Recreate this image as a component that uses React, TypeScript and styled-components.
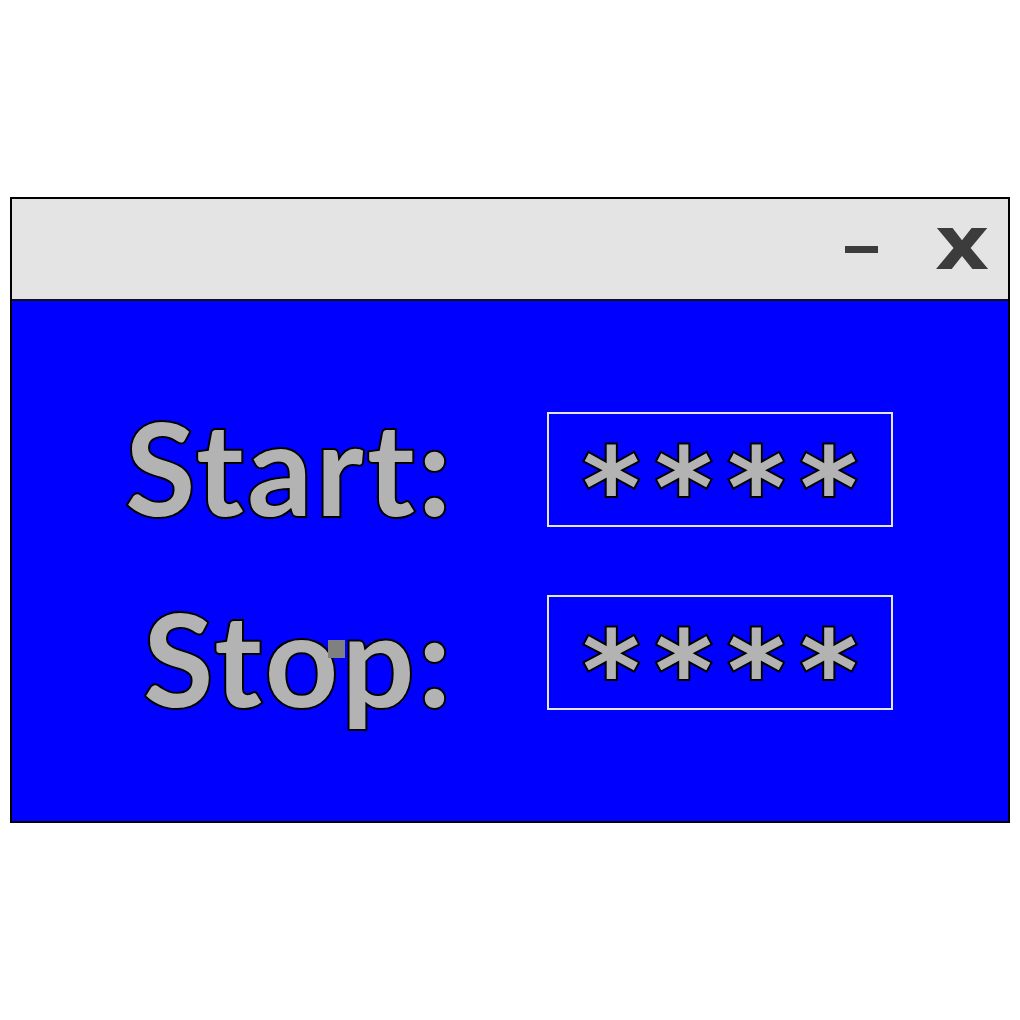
import React from "react";
import styled, { createGlobalStyle } from "styled-components";

const Global = createGlobalStyle`
  html, body { margin: 0; padding: 0; background: #ffffff; }
  body { font-family: "Lato", "Open Sans", sans-serif; }
`;

const Page = styled.div`
  min-height: 100vh;
  display: flex;
  align-items: center;
  padding: 0 10px;
  box-sizing: border-box;
`;

const Window = styled.div`
  width: 1000px;
  height: 626px;
  box-sizing: border-box;
  border: 2px solid #000000;
  display: flex;
  flex-direction: column;
  background: #0000ff;
`;

const TitleBar = styled.div`
  height: 102px;
  box-sizing: border-box;
  background: #e4e4e4;
  border-bottom: 2px solid #111111;
  display: flex;
  align-items: center;
  justify-content: flex-end;
  padding-right: 19px;
  gap: 63px;
`;

const MinButton = styled.div`
  width: 33px;
  height: 7px;
  background: #3c3c3c;
`;

const CloseButton = styled.div`
  font-family: "DejaVu Sans", sans-serif;
  font-weight: 700;
  font-size: 75px;
  line-height: 1;
  color: #3c3c3c;
  margin-top: -11px;
  transform: scaleX(1.13);
  transform-origin: right center;
`;

const Body = styled.div`
  flex: 1;
  display: grid;
  grid-template-columns: 439px 346px;
  grid-auto-rows: 115px;
  column-gap: 96px;
  row-gap: 68px;
  align-content: start;
  padding-top: 111px;
`;

const Label = styled.div<{ $shift: number }>`
  position: relative;
  justify-self: end;
  display: flex;
  align-items: center;
  font-family: "Lato", sans-serif;
  font-weight: 700;
  font-size: 128px;
  line-height: 1;
  letter-spacing: 3.5px;
  margin-right: -3.5px;
  color: #b3b3b3;
  -webkit-text-stroke: 4px #000000;
  paint-order: stroke fill;
  margin-top: ${(p) => p.$shift}px;
`;

const Glitch = styled.span`
  position: absolute;
  right: 110px;
  top: 35px;
  width: 17px;
  height: 18px;
  background: #808080;
`;

const Field = styled.div`
  box-sizing: border-box;
  border: 2px solid #e6e6e6;
  display: flex;
  align-items: center;
  justify-content: center;
`;

const Stars = styled.span`
  font-family: "DejaVu Sans", sans-serif;
  font-weight: 700;
  font-size: 110px;
  line-height: 1;
  color: #b3b3b3;
  -webkit-text-stroke: 4px #000000;
  paint-order: stroke fill;
  letter-spacing: 15px;
  margin-top: 38px;
  margin-right: -15px;
`;

export default function App() {
  return (
    <>
      <Global />
      <Page>
        <Window>
          <TitleBar>
            <MinButton />
            <CloseButton>x</CloseButton>
          </TitleBar>
          <Body>
            <Label $shift={-6}>Start:</Label>
            <Field>
              <Stars>****</Stars>
            </Field>
            <Label $shift={10}>
              Stop:
              <Glitch />
            </Label>
            <Field>
              <Stars>****</Stars>
            </Field>
          </Body>
        </Window>
      </Page>
    </>
  );
}
